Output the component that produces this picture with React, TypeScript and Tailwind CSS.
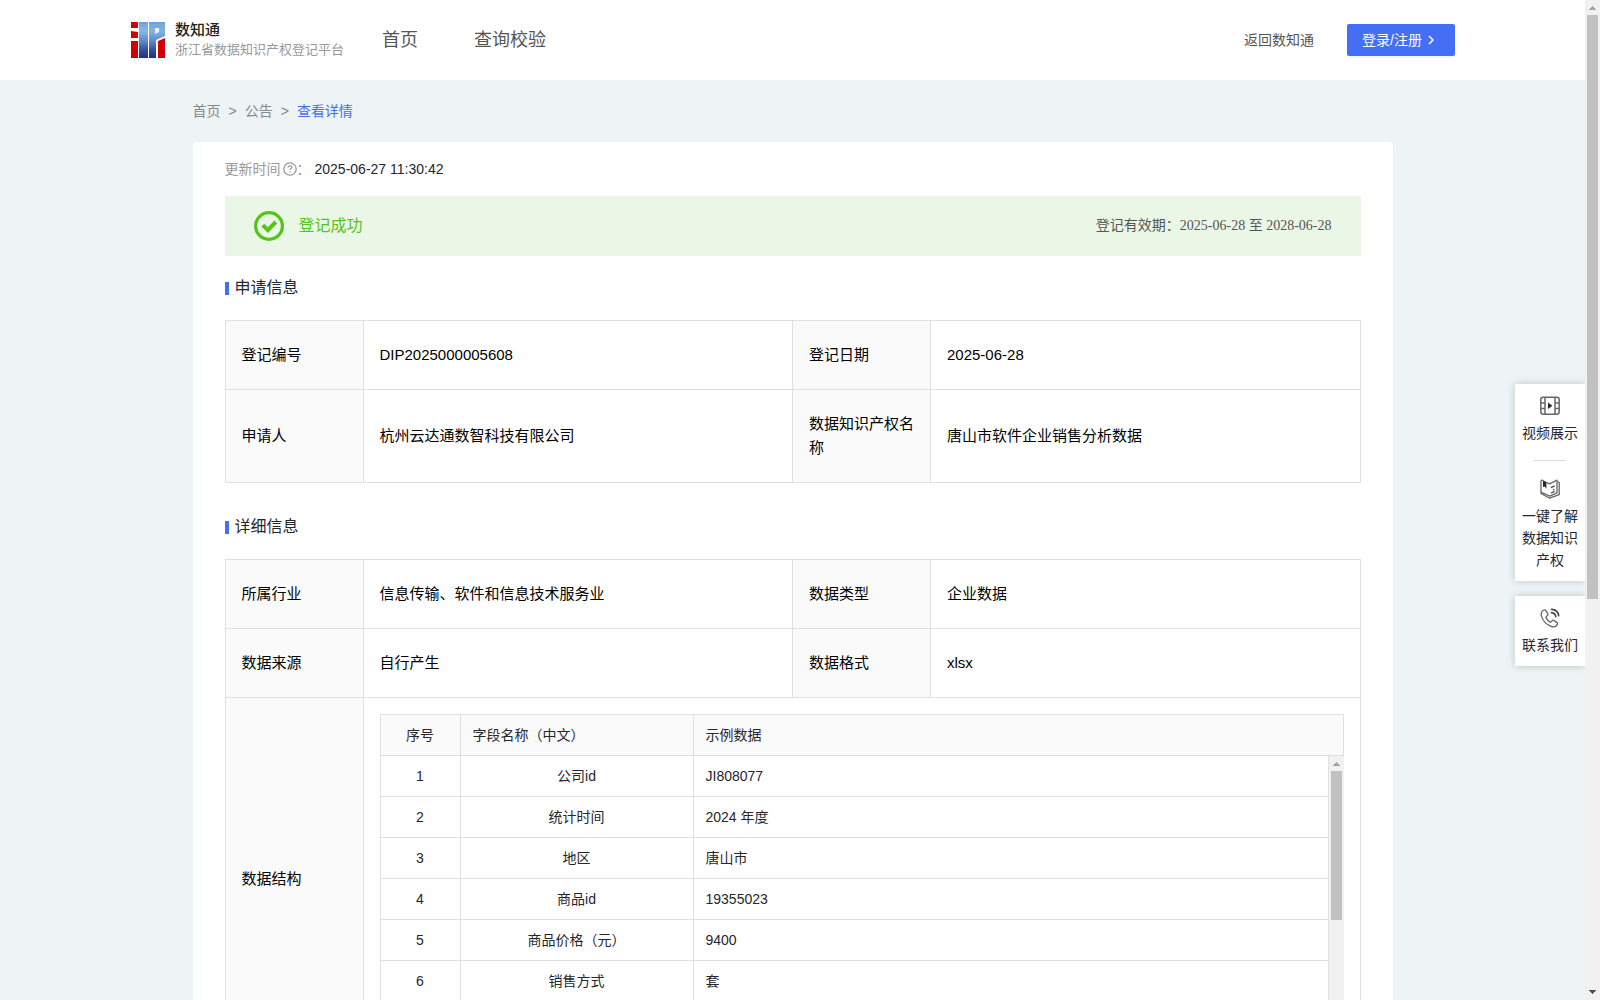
import React from 'react';

type Pair = [string, string];

const basicRows: Pair[][] = [
  [['登记编号', 'DIP2025000005608'], ['登记日期', '2025-06-28']],
  [['申请人', '杭州云达通数智科技有限公司'], ['数据知识产权名称', '唐山市软件企业销售分析数据']],
];

const detailRows: Pair[][] = [
  [['所属行业', '信息传输、软件和信息技术服务业'], ['数据类型', '企业数据']],
  [['数据来源', '自行产生'], ['数据格式', 'xlsx']],
];

const fields: Pair[] = [
  ['公司id', 'JI808077'],
  ['统计时间', '2024 年度'],
  ['地区', '唐山市'],
  ['商品id', '19355023'],
  ['商品价格（元）', '9400'],
  ['销售方式', '套'],
];

function Logo() {
  return (
    <svg width="34" height="36" viewBox="0 0 34 36" aria-hidden="true">
      <defs>
        <linearGradient id="logoBlue" gradientUnits="userSpaceOnUse" x1="0" y1="0" x2="0" y2="36">
          <stop offset="0" stopColor="#6c9fd6" />
          <stop offset="0.25" stopColor="#84b4e6" />
          <stop offset="0.55" stopColor="#5c86c6" />
          <stop offset="0.8" stopColor="#304a98" />
          <stop offset="1" stopColor="#22307e" />
        </linearGradient>
      </defs>
      <path fill="#cf000c" d="M0 0h7v6H0zM0 9l7 1v6H0zM0 19h7v17H0zM27 19l7-3v20h-7z" />
      <path fill="url(#logoBlue)" d="M8 0h9v36H8z" />
      <path fill="url(#logoBlue)" d="M18 0h16v14l-9 4v18h-7z" />
      <path fill="#fff" fillOpacity="0.85" d="M24 6h4v4l-4 2z" />
      <path stroke="#fff" strokeOpacity="0.25" strokeWidth="0.6" d="M8 3h9M18 3h16M8 6h9M8 9h9M8 12h9" />
    </svg>
  );
}

function Arrow({ down = false, className }: { down?: boolean; className: string }) {
  return (
    <svg width="7" height="4" viewBox="0 0 7 4" className={className} shapeRendering="crispEdges" aria-hidden="true">
      <path fill="currentColor" d={down ? 'M0 0h7v1H6v1H5v1H4v1H3V3H2V2H1V1H0z' : 'M3 0h1v1h1v1h1v1h1v1H0V3h1V2h1V1h1z'} />
    </svg>
  );
}

function SectionTitle({ children }: { children: React.ReactNode }) {
  return (
    <h2 className="flex items-center gap-[6px] text-[16px] leading-6 text-[#26262f]">
      <span className="mt-px h-[13px] w-1 bg-[#446ff5]" />
      {children}
    </h2>
  );
}

function InfoTable({ rows, children }: { rows: Pair[][]; children?: React.ReactNode }) {
  return (
    <table className="w-full table-fixed border-collapse text-[15px] leading-6 text-black">
      <colgroup>
        <col className="w-[138px]" />
        <col />
        <col className="w-[138px]" />
        <col />
      </colgroup>
      <tbody>
        {rows.map((row) => (
          <tr key={row[0][0]}>
            {row.map(([label, value]) => (
              <React.Fragment key={label}>
                <th scope="row" className="border border-[#e0e0e0] bg-[#fafafa] px-4 py-[22px] text-left font-normal">
                  {label}
                </th>
                <td className="border border-[#e0e0e0] px-4 py-[22px]">{value}</td>
              </React.Fragment>
            ))}
          </tr>
        ))}
        {children}
      </tbody>
    </table>
  );
}

function FieldColumns() {
  return (
    <colgroup>
      <col className="w-[80px]" />
      <col className="w-[233px]" />
      <col />
    </colgroup>
  );
}

function FieldTable() {
  return (
    <div className="text-[14px] leading-5 text-[#26262f]">
      <table className="w-full table-fixed border-collapse">
        <FieldColumns />
        <thead>
          <tr className="h-[41px] bg-[#fafafa]">
            <th className="border border-[#e0e0e0] text-center font-normal">序号</th>
            <th className="border border-[#e0e0e0] px-3 text-left font-normal">字段名称（中文）</th>
            <th className="border border-[#e0e0e0] px-3 text-left font-normal">示例数据</th>
          </tr>
        </thead>
      </table>
      <div className="flex h-[287px] overflow-hidden">
        <div className="min-w-0 flex-1">
          <table className="-mt-px w-full table-fixed border-collapse">
            <FieldColumns />
            <tbody>
              {fields.map(([name, sample]: Pair, i) => (
                <tr key={name} className="h-[41px]">
                  <td className="border border-[#e0e0e0] text-center">{i + 1}</td>
                  <td className="border border-[#e0e0e0] text-center">{name}</td>
                  <td className="border border-[#e0e0e0] px-3">{sample}</td>
                </tr>
              ))}
            </tbody>
          </table>
        </div>
        <div className="flex w-[15px] flex-col items-center bg-[#f1f1f1]">
          <Arrow className="mt-[6px] mb-[5px] shrink-0 text-[#a3a3a3]" />
          <div className="h-[149px] w-[11px] bg-[#c1c1c1]" />
        </div>
      </div>
    </div>
  );
}

function VideoIcon() {
  return (
    <svg width="20" height="20" viewBox="0 0 20 20" fill="none" stroke="#66666c" strokeWidth="1.5" aria-hidden="true">
      <rect x="0.8" y="1.2" width="18.4" height="17" rx="2.4" />
      <path d="M5 1.2v17M15 1.2v17M1 7h4M1 12.5h4M15 7h4M15 12.5h4" />
      <path d="M8 6.6v6.4l4.4-3.2z" fill="#26262f" stroke="none" />
    </svg>
  );
}

function BookIcon() {
  return (
    <svg width="20" height="20" viewBox="0 0 20 20" fill="none" stroke="#66666c" strokeWidth="1.3" strokeLinejoin="round" aria-hidden="true">
      <path d="M1 1.2l2 .2M1 1.2v13.200l8.600 4.800 9.600-3.600V3.400l-1.600-.6" />
      <path d="M6.400 3.400l3.200 1.400 7.400-3.600v12.600l-7.200 3.400L1 13" />
      <path d="M11 8.600l3.600-1.800M14.400 10.200l-1.400.8M11 14l3.600-1.600" stroke="#44444a" />
      <path d="M3 1.200l3.400 1.800v6.400L4.700 7.600 3 8z" fill="#26262f" stroke="none" />
    </svg>
  );
}

function PhoneIcon() {
  return (
    <svg width="20" height="20" viewBox="0 0 20 20" fill="none" stroke="#66666c" strokeWidth="1.3" strokeLinecap="round" strokeLinejoin="round" aria-hidden="true">
      <path d="M3.400 2.200C1.200 3.600.6 5.800 1.600 8.600c1.600 4.400 5 8 9.400 9.800 2.600 1 5 .4 6.200-1.800.5-.9.3-1.700-.4-2.200l-2.600-1.800c-.8-.6-1.600-.5-2.200.2l-.8.9c-.4.500-.9.600-1.500.2-1.600-1-2.800-2.400-3.600-4-.3-.6-.2-1.100.3-1.500l.9-.8c.7-.6.8-1.400.3-2.200L5.800 2.700c-.6-.8-1.500-1-2.400-.5z" />
      <path d="M11.400 4.600c2.400.2 4 1.800 4.400 4M11.600 1.400c3.800.2 6.600 2.800 7.100 6.400" stroke="#44444a" strokeWidth="1.6" />
    </svg>
  );
}

function SideButton({ icon, children }: { icon: React.ReactNode; children: React.ReactNode }) {
  return (
    <button type="button" className="flex w-full flex-col items-center gap-[6px] px-[7px] text-[14px] leading-[22px] text-[#26262f]">
      {icon}
      <span>{children}</span>
    </button>
  );
}

export default function App() {
  return (
    <div className="flex h-screen overflow-hidden bg-[#eef3f6] font-['Liberation_Sans','Noto_Sans_CJK_SC',sans-serif]">
      <div className="relative min-w-0 flex-1 overflow-hidden">
        <header className="flex h-20 items-center bg-white pr-[130px] pl-[131px]">
          <a href="#home" className="flex items-center gap-[10px]">
            <Logo />
            <span className="flex flex-col">
              <span className="text-[15px] leading-5 font-medium text-[#222]">数知通</span>
              <span className="text-[13px] leading-5 text-[#999]">浙江省数据知识产权登记平台</span>
            </span>
          </a>
          <nav className="ml-[38px] flex gap-14 text-[18px] leading-7 text-[#555]">
            <a href="#index">首页</a>
            <a href="#query">查询校验</a>
          </nav>
          <a href="#back" className="ml-auto text-[14px] leading-5 text-[#555]">返回数知通</a>
          <button type="button" className="ml-[33px] flex h-8 w-[108px] items-center gap-[6px] rounded-[2px] bg-[#446ff5] pl-[15px] text-[14px] text-white shadow-[0_2px_0_rgba(0,0,0,0.045)]">
            登录/注册
            <svg width="6" height="10" viewBox="0 0 6 10" fill="none" stroke="currentColor" strokeWidth="1.5" aria-hidden="true">
              <path d="M1 1l4 4-4 4" />
            </svg>
          </button>
        </header>

        <div className="mx-auto max-w-[1200px]">
          <nav aria-label="面包屑" className="flex h-[62px] items-center gap-2 pb-px text-[14px] leading-5 text-[#888]">
            <a href="#index">首页</a>
            <span>&gt;</span>
            <a href="#notice">公告</a>
            <span>&gt;</span>
            <a href="#detail" className="text-[#446ff5]">查看详情</a>
          </nav>

          <main className="rounded-[4px] bg-white px-8 pt-4">
            <div className="flex h-[22px] items-center text-[14px] leading-[22px] text-[#999]">
              <span>更新时间</span>
              <svg width="14" height="14" viewBox="0 0 14 14" className="ml-[2px]" fill="none" stroke="#999" strokeWidth="1.3" aria-hidden="true">
                <circle cx="7" cy="7" r="6.200" />
                <path d="M5.200 5.600c0-1.100.8-1.800 1.800-1.800s1.800.7 1.800 1.600c0 1.100-1.800 1.200-1.800 2.600M7 9.300v1.200" />
              </svg>
              <span>：</span>
              <span className="ml-[4px] text-[#26262f]">2025-06-27 11:30:42</span>
            </div>

            <div className="mt-4 flex h-[60px] items-center bg-[#ebf7e6] pr-[29px] pl-[29px]">
              <svg width="30" height="30" viewBox="0 0 30 30" fill="none" stroke="#52c41a" aria-hidden="true">
                <circle cx="15" cy="15" r="13.400" strokeWidth="3.200" />
                <path d="M8.800 14.200l5 5 8-8.200" strokeWidth="4" />
              </svg>
              <span className="ml-[15px] text-[16px] leading-6 text-[#52c41a]">登记成功</span>
              <span className="ml-auto font-['Liberation_Serif','Noto_Sans_CJK_SC',serif] text-[14px] leading-[22px] text-[#555]">
                登记有效期：2025-06-28 至 2028-06-28
              </span>
            </div>

            <div className="mt-5 mb-5">
              <SectionTitle>申请信息</SectionTitle>
            </div>
            <InfoTable rows={basicRows} />

            <div className="mt-8 mb-5">
              <SectionTitle>详细信息</SectionTitle>
            </div>
            <InfoTable rows={detailRows}>
              <tr>
                <th scope="row" className="border border-[#e0e0e0] bg-[#fafafa] px-4 text-left font-normal">数据结构</th>
                <td colSpan={3} className="border border-[#e0e0e0] p-4">
                  <FieldTable />
                </td>
              </tr>
            </InfoTable>
          </main>
        </div>

        <aside className="absolute top-[384px] right-0 flex w-[70px] flex-col gap-[15px]">
          <div className="flex flex-col items-center bg-white pt-3 pb-[10px] shadow-[0_0_8px_rgba(0,0,0,0.2)]">
            <SideButton icon={<VideoIcon />}>视频展示</SideButton>
            <hr className="mt-4 mb-[18px] w-8 border-[#ddd]" />
            <SideButton icon={<BookIcon />}>一键了解数据知识产权</SideButton>
          </div>
          <div className="bg-white pt-3 pb-[10px] shadow-[0_0_8px_rgba(0,0,0,0.2)]">
            <SideButton icon={<PhoneIcon />}>联系我们</SideButton>
          </div>
        </aside>
      </div>

      <div aria-hidden="true" className="flex w-[15px] shrink-0 flex-col items-center bg-[#f1f1f1]">
        <Arrow className="mt-[6px] mb-[5px] shrink-0 text-[#a3a3a3]" />
        <div className="h-[584px] w-[11px] bg-[#c1c1c1]" />
        <Arrow down className="mt-auto mb-[6px] shrink-0 text-[#505050]" />
      </div>
    </div>
  );
}
